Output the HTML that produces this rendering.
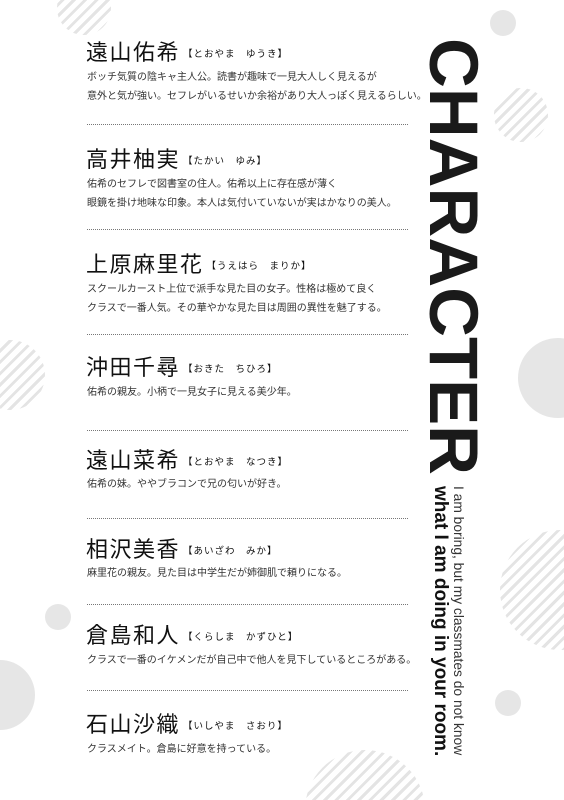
<!DOCTYPE html>
<html><head><meta charset="utf-8"><style>
*{margin:0;padding:0;box-sizing:border-box}
html,body{width:564px;height:800px;overflow:hidden}
body{background:#fff;font-family:"Liberation Sans","Noto Sans CJK JP",sans-serif;color:#222}
#w{position:relative;width:564px;height:800px;overflow:hidden}
.c{position:absolute;border-radius:50%;background:#e6e6e6}
.s{position:absolute;border-radius:50%;background:repeating-linear-gradient(135deg,#e4e4e4 0 3px,transparent 3px 8px)}
.n{position:absolute;left:86px;font-size:22px;letter-spacing:1.5px;line-height:24px;color:#111;white-space:nowrap}
.n small{font-size:9.5px;letter-spacing:1px;vertical-align:3px;margin-left:3px}
.d{position:absolute;left:87px;font-size:10px;line-height:19px;color:#333;white-space:nowrap}
.h{position:absolute;left:87px;width:321px;border-top:1px dotted #777}
.t{position:absolute;writing-mode:vertical-rl;white-space:nowrap}
</style></head><body><div id="w">
<div class="s" style="left:57px;top:-19px;width:54px;height:54px"></div>
<div class="c" style="left:490px;top:10px;width:26px;height:26px"></div>
<div class="s" style="left:494px;top:88px;width:54px;height:54px"></div>
<div class="c" style="left:518px;top:338px;width:80px;height:80px"></div>
<div class="s" style="left:-25px;top:340px;width:70px;height:70px"></div>
<div class="s" style="left:500px;top:530px;width:120px;height:120px"></div>
<div class="c" style="left:45px;top:604px;width:26px;height:26px"></div>
<div class="c" style="left:-35px;top:660px;width:70px;height:70px"></div>
<div class="c" style="left:495px;top:690px;width:26px;height:26px"></div>
<div style="position:absolute;left:305px;top:750px;width:120px;height:50px;clip-path:circle(60px at 60px 60px);background:repeating-linear-gradient(135deg,#e4e4e4 0 3px,transparent 3px 8px)"></div>

<div class="n" style="top:41px">遠山佑希<small>【とおやま　ゆうき】</small></div>
<div class="d" style="top:68px">ボッチ気質の陰キャ主人公。読書が趣味で一見大人しく見えるが<br>意外と気が強い。セフレがいるせいか余裕があり大人っぽく見えるらしい。</div>
<div class="h" style="top:124px"></div>
<div class="n" style="top:148px">高井柚実<small>【たかい　ゆみ】</small></div>
<div class="d" style="top:175px">佑希のセフレで図書室の住人。佑希以上に存在感が薄く<br>眼鏡を掛け地味な印象。本人は気付いていないが実はかなりの美人。</div>
<div class="h" style="top:229px"></div>
<div class="n" style="top:253px">上原麻里花<small>【うえはら　まりか】</small></div>
<div class="d" style="top:280px">スクールカースト上位で派手な見た目の女子。性格は極めて良く<br>クラスで一番人気。その華やかな見た目は周囲の異性を魅了する。</div>
<div class="h" style="top:334px"></div>
<div class="n" style="top:356px">沖田千尋<small>【おきた　ちひろ】</small></div>
<div class="d" style="top:383px">佑希の親友。小柄で一見女子に見える美少年。</div>
<div class="h" style="top:430px"></div>
<div class="n" style="top:449px">遠山菜希<small>【とおやま　なつき】</small></div>
<div class="d" style="top:475px">佑希の妹。ややブラコンで兄の匂いが好き。</div>
<div class="h" style="top:518px"></div>
<div class="n" style="top:538px">相沢美香<small>【あいざわ　みか】</small></div>
<div class="d" style="top:564px">麻里花の親友。見た目は中学生だが姉御肌で頼りになる。</div>
<div class="h" style="top:604px"></div>
<div class="n" style="top:624px">倉島和人<small>【くらしま　かずひと】</small></div>
<div class="d" style="top:651px">クラスで一番のイケメンだが自己中で他人を見下しているところがある。</div>
<div class="h" style="top:690px"></div>
<div class="n" style="top:713px">石山沙織<small>【いしやま　さおり】</small></div>
<div class="d" style="top:740px">クラスメイト。倉島に好意を持っている。</div>

<div class="t" style="left:420px;top:38px;font-size:69px;font-weight:bold;line-height:66px;color:#1a1a1a">CHARACTER</div>
<div class="t" style="left:431px;top:486px;line-height:18px"><span style="font-size:13.8px;color:#333">I am boring, but my classmates do not know</span><br><span style="font-size:19px;font-weight:bold;color:#111">what I am doing in your room.</span></div>
</div></body></html>
